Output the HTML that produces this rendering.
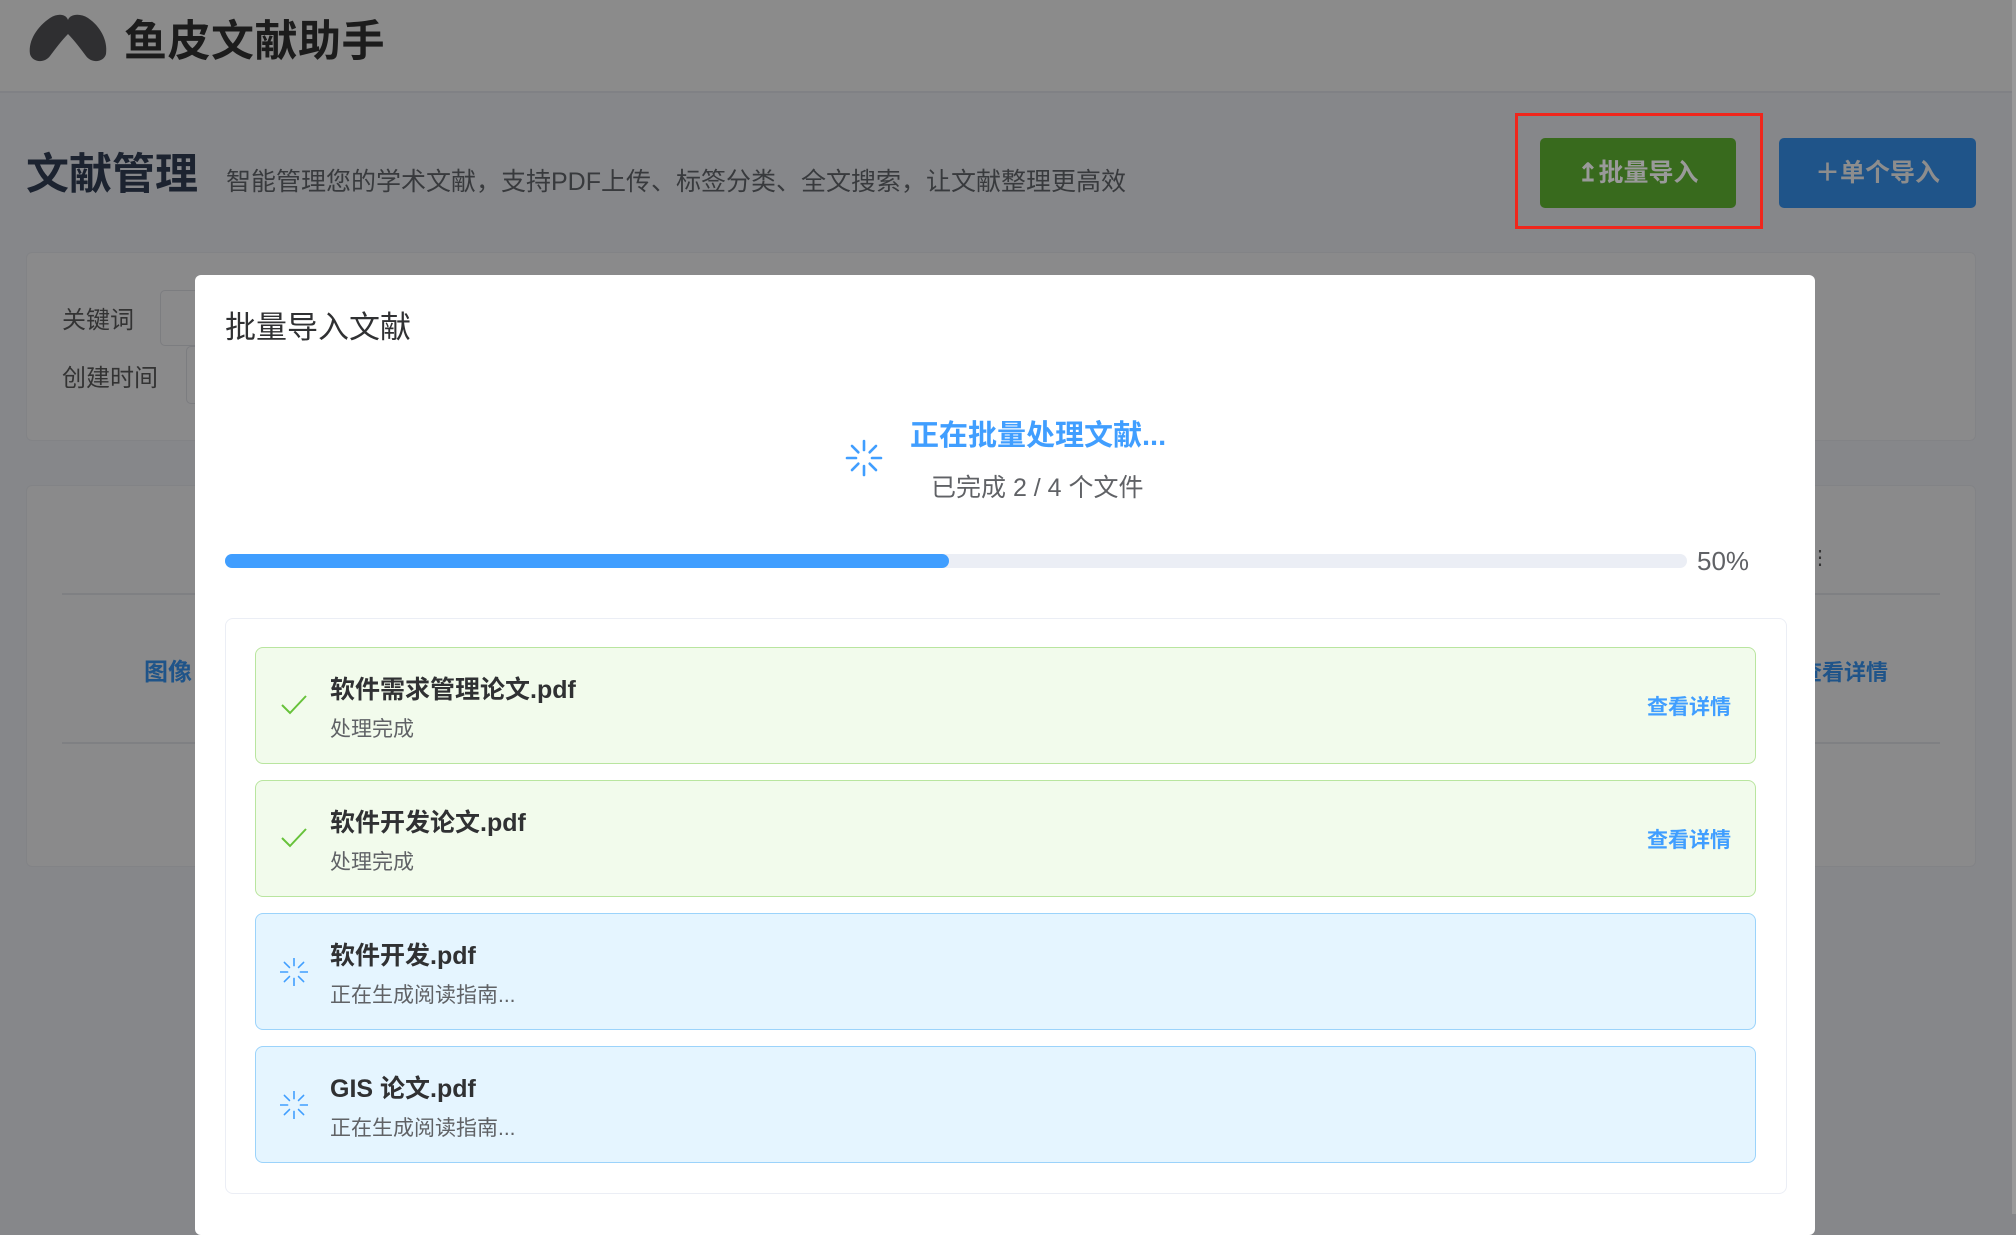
<!DOCTYPE html>
<html><head><meta charset="utf-8"><style>
*{margin:0;padding:0;box-sizing:border-box}
body{width:2016px;height:1214px;overflow:hidden;background:#86878a;font-family:"Liberation Sans","Noto Sans CJK SC",sans-serif;position:relative}
.abs{position:absolute}
.hdr{left:0;top:0;width:2016px;height:93px;background:#8b8b8b;border-bottom:2px solid #808185}
.card{background:#8a8a8b;border:1px solid #828386;border-radius:6px}
.modal{left:195px;top:275px;width:1620px;height:960px;background:#fff;border-radius:6px}
.item{left:29px;width:1501px;height:117px;border-radius:8px;border:1.5px solid}
.g{background:#f2fbec;border-color:#b9e59f}
.b{background:#e5f5ff;border-color:#9bd3fb}
.nm{left:74px;top:22px;font-size:25px;font-weight:bold;color:#303133;white-space:nowrap}
.st{left:74px;top:65px;font-size:21px;color:#606266;white-space:nowrap}
.lk{right:24px;top:43px;font-size:21px;font-weight:bold;color:#409eff}
</style></head><body>
<div class="abs hdr"></div>
<svg class="abs" style="left:24px;top:10px" width="90" height="58" viewBox="0 0 90 58">
<path d="M6 44 C4 30 14 16 26 8 C34 3 42 4 44 10 C46 4 56 3 64 8 C76 16 84 30 82 44 C80 52 68 54 62 46 C56 38 50 30 44 24 C38 30 32 38 26 46 C20 54 8 52 6 44Z" fill="#2f2f31"/>
</svg>
<div class="abs" style="left:124px;top:7px;font-size:43px;font-weight:bold;color:#1c1c1c;letter-spacing:0.5px">鱼皮文献助手</div>
<div class="abs" style="left:26px;top:140px;font-size:43px;font-weight:bold;color:#1c2330">文献管理</div>
<div class="abs" style="left:226px;top:162px;font-size:25px;color:#383a3d">智能管理您的学术文献，支持PDF上传、标签分类、全文搜索，让文献整理更高效</div>
<div class="abs" style="left:1515px;top:113px;width:248px;height:116px;border:3px solid #f0261c"></div>
<div class="abs" style="left:1540px;top:138px;width:196px;height:70px;background:#386a1d;border-radius:5px;color:#9a9a9a;font-size:25px;font-weight:bold;text-align:center;line-height:70px">↥批量导入</div>
<div class="abs" style="left:1779px;top:138px;width:197px;height:70px;background:#1f5489;border-radius:5px;color:#8d8d8d;font-size:25px;font-weight:bold;text-align:center;line-height:70px">＋单个导入</div>
<div class="abs card" style="left:26px;top:252px;width:1950px;height:189px"></div>
<div class="abs" style="left:62px;top:300px;font-size:24px;color:#333">关键词</div>
<div class="abs" style="left:62px;top:358px;font-size:24px;color:#333">创建时间</div>
<div class="abs" style="left:160px;top:290px;width:60px;height:56px;border:1.5px solid #7c7d80;border-radius:5px"></div>
<div class="abs" style="left:186px;top:346px;width:60px;height:58px;border:1.5px solid #7c7d80;border-radius:5px"></div>
<div class="abs card" style="left:26px;top:485px;width:1950px;height:382px"></div>
<div class="abs" style="left:62px;top:593px;width:1878px;height:2px;background:#7f8083"></div>
<div class="abs" style="left:62px;top:742px;width:1878px;height:2px;background:#7f8083"></div>
<div class="abs" style="left:144px;top:652px;font-size:24px;font-weight:bold;color:#1f5489">图像</div>
<div class="abs" style="left:1800px;top:655px;font-size:22px;font-weight:bold;color:#1f5489">查看详情</div>
<div class="abs" style="left:1810px;top:545px;font-size:20px;color:#333">⋮</div>
<div class="abs" style="left:2012px;top:0;width:4px;height:1214px;background:#9a9a9a"></div>

<div class="abs modal">
 <div class="abs" style="left:30px;top:27px;font-size:31px;color:#303133">批量导入文献</div>
 <svg class="abs" style="left:650px;top:164px" width="38" height="38" viewBox="-19 -19 38 38" stroke="#409eff" stroke-width="2.6" stroke-linecap="round">
  <g id="sp"><line x1="0" y1="-17" x2="0" y2="-8"/><line x1="0" y1="8" x2="0" y2="17"/><line x1="-17" y1="0" x2="-8" y2="0"/><line x1="8" y1="0" x2="17" y2="0"/></g>
  <use href="#sp" transform="rotate(45)"/>
 </svg>
 <div class="abs" style="left:715px;top:137px;font-size:29px;font-weight:bold;color:#409eff">正在批量处理文献...</div>
 <div class="abs" style="left:736px;top:193px;font-size:25px;color:#606266">已完成 2 / 4 个文件</div>
 <div class="abs" style="left:30px;top:279px;width:1462px;height:14px;background:#ebeef5;border-radius:7px"><div style="width:724px;height:14px;background:#409eff;border-radius:7px"></div></div>
 <div class="abs" style="left:1502px;top:271px;font-size:26px;color:#606266">50%</div>
 <div class="abs" style="left:30px;top:343px;width:1562px;height:576px;border:1.5px solid #ebeef5;border-radius:8px">
  <div class="abs item g" style="top:28px"><svg class="abs" style="left:24px;top:46px" width="28" height="22"><path d="M2 11 L10 19 L26 2" fill="none" stroke="#67c23a" stroke-width="2"/></svg><div class="abs nm">软件需求管理论文.pdf</div><div class="abs st">处理完成</div><div class="abs lk">查看详情</div></div>
  <div class="abs item g" style="top:161px"><svg class="abs" style="left:24px;top:46px" width="28" height="22"><path d="M2 11 L10 19 L26 2" fill="none" stroke="#67c23a" stroke-width="2"/></svg><div class="abs nm">软件开发论文.pdf</div><div class="abs st">处理完成</div><div class="abs lk">查看详情</div></div>
  <div class="abs item b" style="top:294px"><svg class="abs" style="left:24px;top:44px" width="28" height="28" viewBox="-14 -14 28 28" stroke="#409eff" stroke-width="2" stroke-linecap="round"><use href="#sp" transform="scale(0.8)"/><use href="#sp" transform="scale(0.8) rotate(45)"/></svg><div class="abs nm">软件开发.pdf</div><div class="abs st">正在生成阅读指南...</div></div>
  <div class="abs item b" style="top:427px"><svg class="abs" style="left:24px;top:44px" width="28" height="28" viewBox="-14 -14 28 28" stroke="#409eff" stroke-width="2" stroke-linecap="round"><use href="#sp" transform="scale(0.8)"/><use href="#sp" transform="scale(0.8) rotate(45)"/></svg><div class="abs nm">GIS 论文.pdf</div><div class="abs st">正在生成阅读指南...</div></div>
 </div>
</div>
</body></html>
